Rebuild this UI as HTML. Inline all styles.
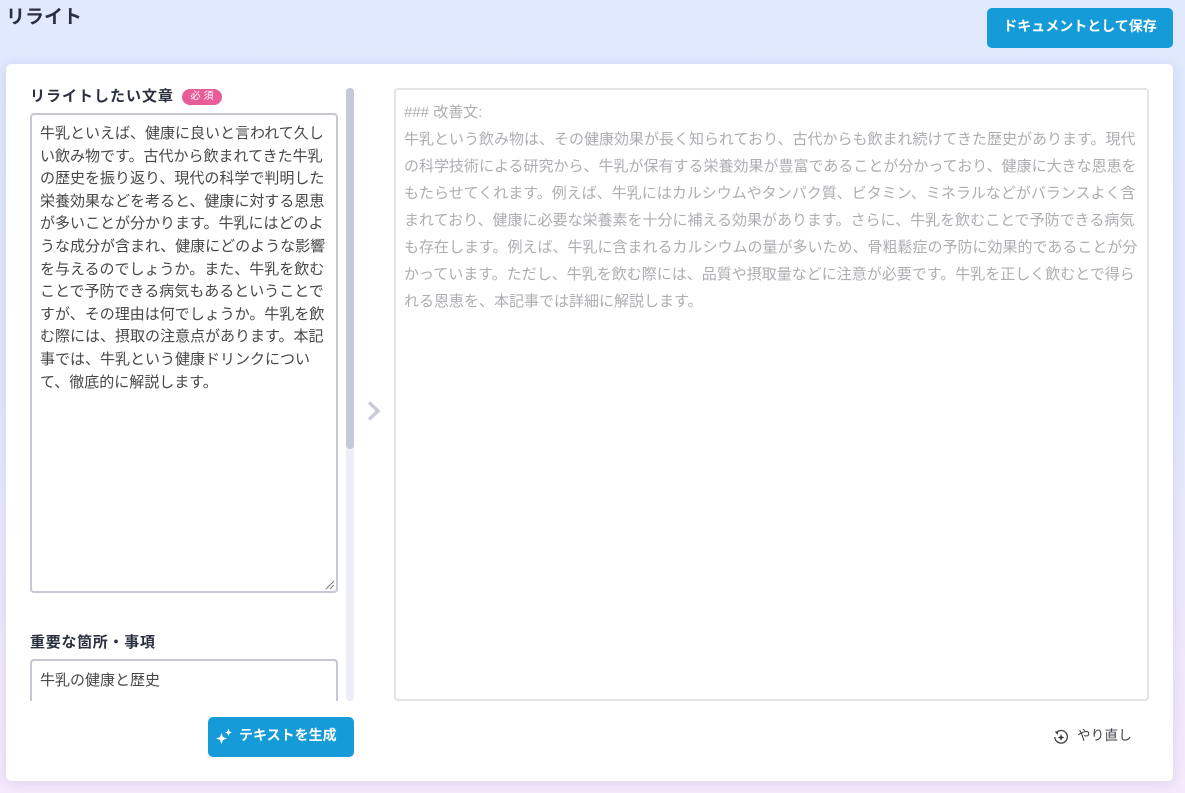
<!DOCTYPE html>
<html lang="ja"><head><meta charset="utf-8">
<style>
*{box-sizing:border-box}
html,body{margin:0;padding:0;width:1185px;height:793px;overflow:hidden}
body{position:relative;background:linear-gradient(180deg,#e0e9fd 0%,#e4e8fc 50%,#f6e9fb 100%);font-family:"Liberation Sans","Noto Sans CJK JP",sans-serif;color:#2b3040}
.a{position:absolute;white-space:nowrap}
.card{position:absolute;left:6px;top:64px;width:1167px;height:717px;background:#fff;border-radius:5px;box-shadow:0 2px 12px rgba(90,90,180,.16)}
.btn{position:absolute;background:#169bd9;border-radius:5px;color:#fff;font-weight:700;font-size:14px;line-height:40px;text-align:center}
.clip{position:absolute;left:0;top:0;width:346px;height:701px;overflow:hidden}
.ta{position:absolute;left:30px;width:308px;border:2px solid #c5c8d0;border-radius:4px;background:#fff;color:#484848;font-size:15px;line-height:22.6px}
.lbl{font-size:15px;font-weight:700;color:#2b3040;letter-spacing:1px}
</style></head><body>
<div class="a" style="left:6px;top:6px;font-size:19px;font-weight:700;line-height:24px;color:#2b3040">リライト</div>
<div class="btn" style="left:987px;top:8px;width:186px;height:40px;line-height:37px">ドキュメントとして保存</div>
<div class="card"></div>
<div class="clip">
<div class="a lbl" style="left:30px;top:86px;line-height:22px">リライトしたい文章</div>
<div class="a" style="left:182px;top:89px;width:40px;height:16px;border-radius:8px;background:#e85d97;color:#fff;font-size:10px;line-height:16px;text-align:center;letter-spacing:3px;padding-left:3px">必須</div>
<div class="ta" style="top:113px;height:480px">
<div class="a" style="left:8px;top:8px">牛乳といえば、健康に良いと言われて久し<br>い飲み物です。古代から飲まれてきた牛乳<br>の歴史を振り返り、現代の科学で判明した<br>栄養効果などを考ると、健康に対する恩恵<br>が多いことが分かります。牛乳にはどのよ<br>うな成分が含まれ、健康にどのような影響<br>を与えるのでしょうか。また、牛乳を飲む<br>ことで予防できる病気もあるということで<br>すが、その理由は何でしょうか。牛乳を飲<br>む際には、摂取の注意点があります。本記<br>事では、牛乳という健康ドリンクについ<br>て、徹底的に解説します。</div>
<svg style="position:absolute;right:1px;bottom:1px" width="10" height="10" viewBox="0 0 10 10"><path d="M1 9 9 1M5 9 9 5" stroke="#777" stroke-width="1" fill="none"/></svg>
</div>
<div class="a lbl" style="left:30px;top:632px;line-height:22px;letter-spacing:.7px">重要な箇所・事項</div>
<div class="ta" style="top:659px;height:80px">
<div class="a" style="left:8px;top:9px">牛乳の健康と歴史</div>
</div>
</div>
<div style="position:absolute;left:346px;top:88px;width:8px;height:613px;border-radius:4px;background:#eeeef6"></div>
<div style="position:absolute;left:346px;top:88px;width:8px;height:361px;border-radius:4px;background:#c6c9d8"></div>
<svg style="position:absolute;left:366px;top:400px" width="16" height="22" viewBox="0 0 16 22"><path d="M3 2.500 12 11 3 19.500" stroke="#c9ccd6" stroke-width="3.400" fill="none"/></svg>
<div style="position:absolute;left:394px;top:88px;width:755px;height:613px;border:2px solid #e4e4e6;border-radius:4px;background:#fff"></div>
<div class="a" style="left:404px;top:99px;font-size:15px;line-height:27px;color:#acaeb2">### 改善文:<br>牛乳という飲み物は、その健康効果が長く知られており、古代からも飲まれ続けてきた歴史があります。現代<br>の科学技術による研究から、牛乳が保有する栄養効果が豊富であることが分かっており、健康に大きな恩恵を<br>もたらせてくれます。例えば、牛乳にはカルシウムやタンパク質、ビタミン、ミネラルなどがバランスよく含<br>まれており、健康に必要な栄養素を十分に補える効果があります。さらに、牛乳を飲むことで予防できる病気<br>も存在します。例えば、牛乳に含まれるカルシウムの量が多いため、骨粗鬆症の予防に効果的であることが分<br>かっています。ただし、牛乳を飲む際には、品質や摂取量などに注意が必要です。牛乳を正しく飲むとで得ら<br>れる恩恵を、本記事では詳細に解説します。</div>
<div class="btn" style="left:208px;top:717px;width:146px;height:40px;line-height:37px;text-align:left;padding-left:31px">テキストを生成</div>
<svg style="position:absolute;left:215px;top:727px" width="18" height="18" viewBox="0 0 18 18"><path d="M6.500 6 8 10 12 11.500 8 13 6.500 17 5 13 1 11.500 5 10ZM13.500 1.500 14.500 4.500 17 5.500 14.500 6.500 13.500 9 12.500 6.500 10 5.500 12.500 4.500Z" fill="#fff"/></svg>
<svg style="position:absolute;left:1053px;top:729px" width="16" height="16" viewBox="0 0 16 16"><path d="M3.500 3.500A6.300 6.300 0 1 1 1.800 8" stroke="#3a3d46" stroke-width="1.300" fill="none"/><path d="M1.800 2.500 5.500 2.500 4.500 6Z" fill="#3a3d46"/><path d="M8 5 9 7.500 11.500 8.500 9 9.500 8 12 7 9.500 4.500 8.500 7 7.500Z" fill="#3a3d46"/></svg>
<div class="a" style="left:1077px;top:726px;font-size:13.500px;line-height:20px;letter-spacing:.3px;color:#3c3f48">やり直し</div>
</body></html>
